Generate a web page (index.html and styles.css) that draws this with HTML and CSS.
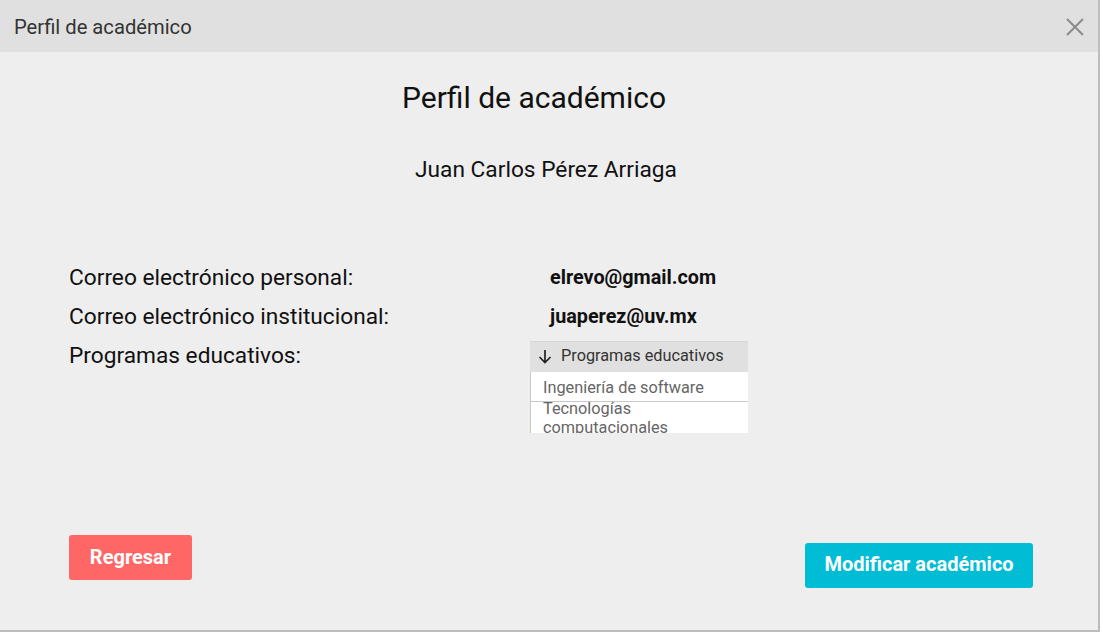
FILE: index.html
```html
<!DOCTYPE html>
<html lang="es">
<head>
<meta charset="utf-8">
<title>Perfil de académico</title>
<link rel="stylesheet" href="styles.css">
</head>
<body>
<div class="window">
  <div class="titlebar">
    <span class="titlebar-text">Perfil de académico</span>
    <svg class="close" width="18" height="18" viewBox="0 0 18 18"><path d="M1 1 L17 17 M17 1 L1 17" stroke="#8a8a8a" stroke-width="2" fill="none"/></svg>
  </div>
  <div class="content">
    <h1 class="heading">Perfil de académico</h1>
    <div class="name">Juan Carlos Pérez Arriaga</div>
    <div class="info">
      <div class="label">Correo electrónico personal:</div>
      <div class="value">elrevo@gmail.com</div>
      <div class="label">Correo electrónico institucional:</div>
      <div class="value">juaperez@uv.mx</div>
      <div class="label">Programas educativos:</div>
      <div class="list">
        <div class="list-head"><svg class="arrow" width="14" height="15" viewBox="0 0 14 15"><path d="M7 1 V13.5 M1.5 8 L7 13.5 L12.5 8" stroke="#222" stroke-width="1.7" fill="none"/></svg>Programas educativos</div>
        <div class="list-body">
          <div class="list-item">Ingeniería de software</div>
          <div class="list-item">Tecnologías computacionales</div>
        </div>
      </div>
    </div>
    <div class="actions">
      <button class="btn btn-back">Regresar</button>
      <button class="btn btn-edit">Modificar académico</button>
    </div>
  </div>
</div>
</body>
</html>
```

FILE: styles.css
```css
html, body {
  margin: 0;
  padding: 0;
  background: #ffffff;
}
body {
  font-family: Roboto, "Liberation Sans", sans-serif;
}
.window {
  width: 1100px;
  height: 632px;
  background: #eeeeee;
  border-right: 2px solid #bdbdbd;
  border-bottom: 2px solid #bdbdbd;
  box-sizing: border-box;
  display: flex;
  flex-direction: column;
}
.titlebar {
  height: 52px;
  background: #e0e0e0;
  display: flex;
  align-items: center;
  justify-content: space-between;
  padding: 0 14px 0 14px;
  flex-shrink: 0;
}
.titlebar-text {
  font-size: 20.2px;
  color: #333333;
  margin-top: 2px;
}
.close {
  margin-top: 2px;
}
.content {
  flex: 1;
  position: relative;
  display: flex;
  flex-direction: column;
}
.heading {
  margin: 28px 0 0 0;
  font-size: 30px;
  font-weight: 400;
  color: #111;
  text-align: center;
  padding-right: 30px;
  line-height: 36px;
}
.name {
  margin-top: 40px;
  font-size: 22.7px;
  color: #111;
  text-align: center;
  line-height: 28px;
  padding-right: 6px;
}
.info {
  margin: 79px 0 0 69px;
  display: grid;
  grid-template-columns: 481px 218px;
  row-gap: 10px;
  align-items: start;
}
.label {
  font-size: 22.7px;
  color: #111;
  line-height: 29px;
}
.value {
  font-size: 19.8px;
  font-weight: 700;
  color: #111;
  line-height: 29px;
}
.list {
  margin-left: -20px;
  width: 218px;
}
.list-head {
  height: 31px;
  background: #e0e0e0;
  border-top: 1px solid #d6d6d6;
  box-sizing: border-box;
  display: flex;
  align-items: center;
  font-size: 16.3px;
  color: #333;
  padding-left: 8px;
  padding-bottom: 3px;
}
.arrow {
  margin-right: 9px;
  margin-top: 2px;
}
.list-body {
  height: 61px;
  overflow: hidden;
  border-left: 1px solid #c8c8c8;
  background: #ffffff;
}
.list-item {
  font-size: 16.3px;
  color: #666;
  padding: 0 12px;
  line-height: 19px;
}
.list-item:first-child {
  height: 30px;
  line-height: 29px;
  padding-top: 1px;
  box-sizing: border-box;
  border-bottom: 1px solid #c8c8c8;
}
.list-item + .list-item {
  margin-top: -3px;
}
.actions {
  position: absolute;
  left: 69px;
  right: 65px;
  top: 483px;
  display: flex;
  justify-content: space-between;
  align-items: flex-start;
}
.btn {
  border: none;
  border-radius: 3px;
  color: #ffffff;
  font-family: Roboto, "Liberation Sans", sans-serif;
  font-weight: 700;
  font-size: 20px;
  height: 45px;
  padding-bottom: 3px;
  cursor: pointer;
}
.btn-back {
  background: #ff6666;
  width: 123px;
}
.btn-edit {
  background: #00bcd4;
  width: 228px;
  margin-top: 8px;
  padding-bottom: 5px;
}
```
